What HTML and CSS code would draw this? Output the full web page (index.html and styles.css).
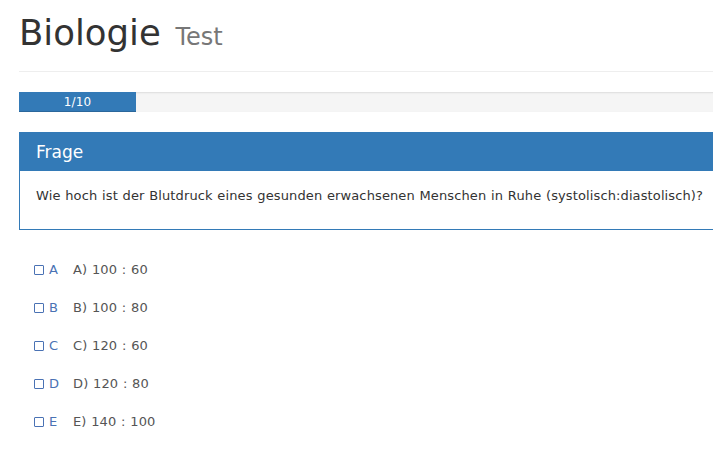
FILE: index.html
```html
<!DOCTYPE html>
<html lang="de">
<head>
<meta charset="utf-8">
<title>Biologie Test</title>
<link rel="stylesheet" href="styles.css">
</head>
<body>
<div class="container">
  <div class="page-header">
    <h1 class="title">Biologie <small class="subtitle">Test</small></h1>
  </div>
  <div class="progress">
    <div class="progress-bar" style="width: 117px;">1/10</div>
  </div>
  <div class="panel">
    <div class="panel-heading">
      <h3 class="panel-title">Frage</h3>
    </div>
    <div class="panel-body">
      <p class="question">Wie hoch ist der Blutdruck eines gesunden erwachsenen Menschen in Ruhe (systolisch:diastolisch)?</p>
    </div>
  </div>
  <ul class="options">
    <li class="option"><span class="check"></span><span class="letter">A</span><span class="answer">A) 100 : 60</span></li>
    <li class="option"><span class="check"></span><span class="letter">B</span><span class="answer">B) 100 : 80</span></li>
    <li class="option"><span class="check"></span><span class="letter">C</span><span class="answer">C) 120 : 60</span></li>
    <li class="option"><span class="check"></span><span class="letter">D</span><span class="answer">D) 120 : 80</span></li>
    <li class="option"><span class="check"></span><span class="letter">E</span><span class="answer">E) 140 : 100</span></li>
  </ul>
</div>
</body>
</html>
```
FILE: styles.css
```css
html, body {
  margin: 0;
  padding: 0;
  overflow: hidden;
  background: #fff;
}
body {
  font-family: "DejaVu Sans", Verdana, sans-serif;
  font-size: 13px;
  line-height: 20px;
  color: #333;
  letter-spacing: 0.12px;
  word-spacing: 0.45px;
}
.container {
  width: 740px;
  padding-left: 19px;
}
.page-header {
  padding-top: 13px;
  padding-bottom: 14px;
  border-bottom: 1px solid #eee;
}
.title {
  margin: 0;
  font-size: 35.5px;
  font-weight: normal;
  line-height: 40px;
  color: #333;
  letter-spacing: 0;
}
.subtitle {
  font-size: 24px;
  color: #777;
  margin-left: 3px;
}
.progress {
  margin-top: 20px;
  height: 20px;
  background: #f5f5f5;
  box-shadow: inset 0 1px 2px rgba(0,0,0,0.1);
  display: flex;
}
.progress-bar {
  background: #337ab7;
  color: #fff;
  font-size: 12px;
  line-height: 20px;
  text-align: center;
  box-shadow: inset 0 -1px 0 rgba(0,0,0,0.15);
}
.panel {
  margin-top: 20px;
  border: 1px solid #337ab7;
  border-right: none;
}
.panel-heading {
  background: #337ab7;
  padding: 10px 15px 10px 16px;
}
.panel-title {
  margin: 0;
  font-size: 17px;
  font-weight: normal;
  line-height: 18px;
  color: #fff;
  letter-spacing: 0;
}
.panel-body {
  padding: 15px 15px 23px 16px;
}
.question {
  margin: 0;
  white-space: nowrap;
}
.options {
  list-style: none;
  margin: 0;
  padding: 21px 0 0 15px;
}
.option {
  display: flex;
  align-items: center;
  height: 38px;
  color: #555;
}
.check {
  width: 8px;
  height: 8px;
  border: 1px solid #4a72b4;
  border-radius: 1px;
}
.letter {
  color: #4a72b4;
  margin-left: 5px;
  width: 24px;
}
.answer {
  color: #555;
}
```
